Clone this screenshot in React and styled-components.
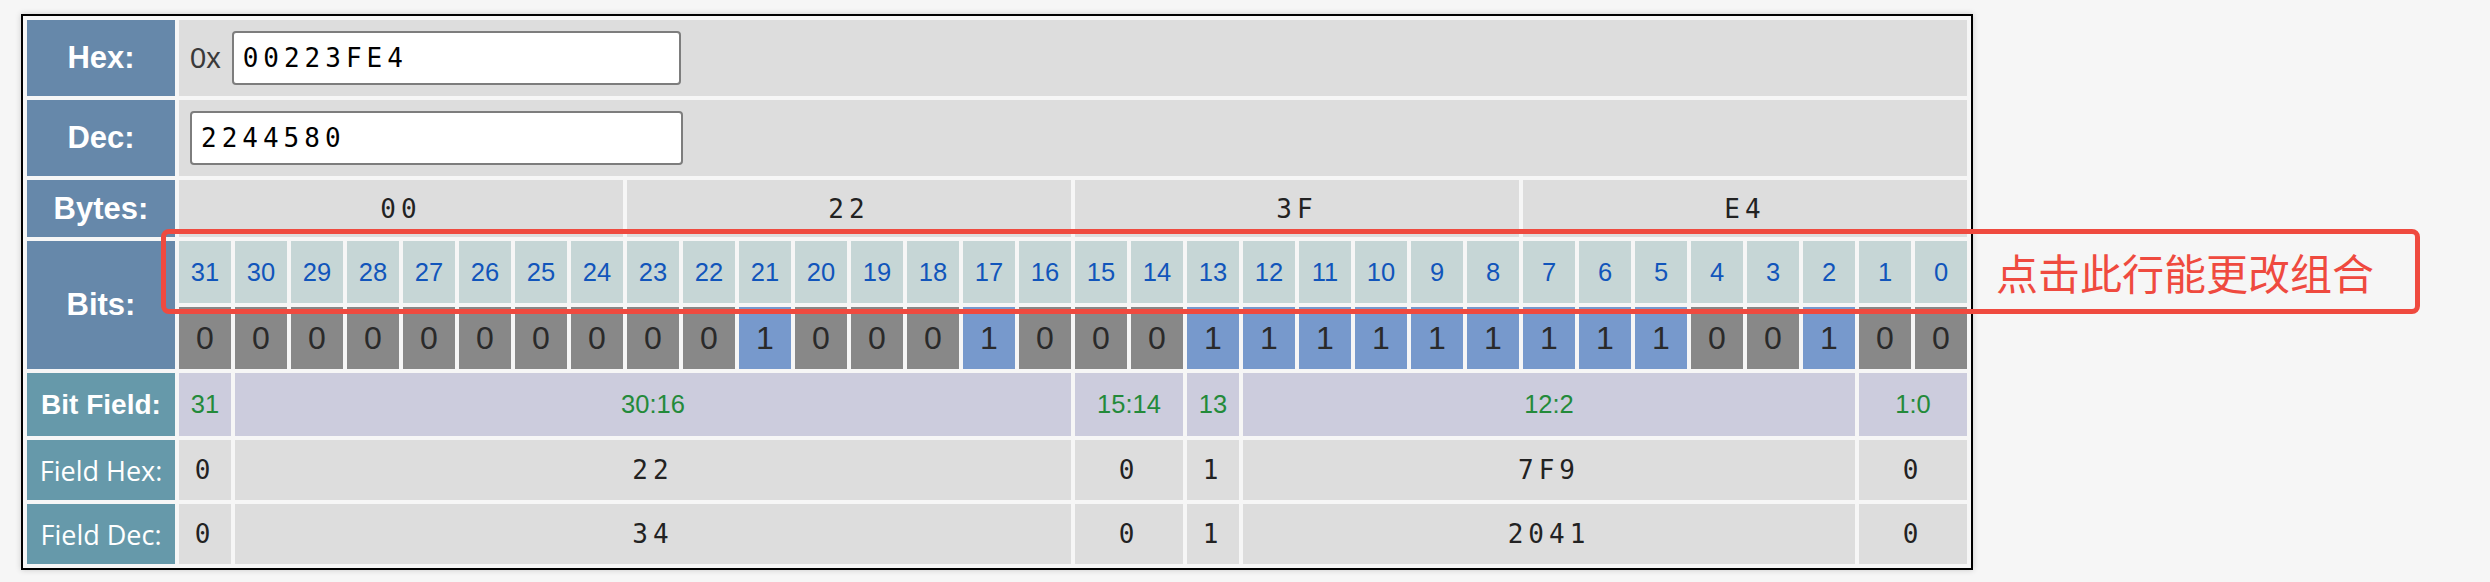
import React from 'react';
import styled, { createGlobalStyle } from 'styled-components';

const GlobalStyle = createGlobalStyle`
  html, body {
    margin: 0;
    padding: 0;
    background: #f6f6f6;
  }
  body {
    font-family: "Liberation Sans", Arial, sans-serif;
  }
`;

const VALUE = 0x00223fe4;
const FIELDS = [
  [31, 31],
  [30, 16],
  [15, 14],
  [13, 13],
  [12, 2],
  [1, 0],
];

const Page = styled.div`
  position: relative;
  box-sizing: border-box;
  width: 2490px;
  height: 582px;
  padding: 14px 0 0 21px;
`;

const Grid = styled.div`
  display: inline-grid;
  grid-template-columns: 148px repeat(32, 52px);
  grid-template-rows: 76px 76px 57px 62px 62px 63px 60px 60px;
  gap: 4px;
  padding: 4px;
  border: 2px solid #000;
  background: #f6f6f6;
  box-shadow: 0 0 6px rgba(0, 0, 0, 0.18);
`;

const Label = styled.div`
  grid-column: 1;
  grid-row: ${(p) => (p.$rows ? `span ${p.$rows}` : 'auto')};
  display: flex;
  align-items: center;
  justify-content: center;
  background: ${(p) => (p.$tone === 'teal' ? '#6699aa' : '#6688aa')};
  color: #fff;
  font-family: ${(p) =>
    p.$light ? '"Open Sans", "Noto Sans", sans-serif' : '"Liberation Sans", Arial, sans-serif'};
  font-weight: ${(p) => (p.$light ? 400 : 700)};
  font-size: ${(p) => p.$size || 31}px;
  white-space: nowrap;
`;

const Cell = styled.div`
  grid-column: span ${(p) => p.$span || 1};
  display: flex;
  align-items: center;
  justify-content: center;
  background: #dddddd;
  color: #222;
  font-family: "DejaVu Sans Mono", "Liberation Mono", monospace;
  font-size: 26px;
  letter-spacing: 5px;
  white-space: nowrap;
`;

const InputCell = styled.div`
  grid-column: span 32;
  display: flex;
  align-items: center;
  padding-left: 11px;
  background: #dddddd;
`;

const Prefix = styled.span`
  font-family: "Liberation Sans", Arial, sans-serif;
  font-size: 29px;
  color: #3a3a3a;
  margin-right: 11px;
`;

const Field = styled.input`
  box-sizing: border-box;
  width: ${(p) => p.$w}px;
  height: 54px;
  padding: 0 0 0 9px;
  border: 2px solid #7d7d7d;
  border-radius: 4px;
  background: #fff;
  color: #000;
  font-family: "DejaVu Sans Mono", "Liberation Mono", monospace;
  font-size: 26px;
  letter-spacing: 5px;
  outline: none;
`;

const BitNum = styled.div`
  display: flex;
  align-items: center;
  justify-content: center;
  background: #c6d6d6;
  color: #1155bb;
  font-size: 25.5px;
  cursor: pointer;
`;

const BitVal = styled.div`
  display: flex;
  align-items: center;
  justify-content: center;
  background: ${(p) => (p.$on ? '#7799cc' : '#888888')};
  color: #2a2a2a;
  font-size: 32px;
`;

const FieldName = styled.div`
  grid-column: span ${(p) => p.$span};
  display: flex;
  align-items: center;
  justify-content: center;
  background: #ccccdd;
  color: #238a3a;
  font-size: 25.5px;
`;

const Note = styled.div`
  position: absolute;
  left: 161px;
  top: 229px;
  width: 2259px;
  height: 85px;
  box-sizing: border-box;
  border: 5px solid #ef4a3f;
  border-radius: 8px;
  display: flex;
  align-items: center;
  justify-content: flex-end;
  padding-right: 41px;
  pointer-events: none;
`;

const NoteText = styled.span`
  font-family: "Noto Sans CJK SC", "Noto Sans", sans-serif;
  font-size: 42px;
  font-weight: 400;
  color: #ef4a3f;
  line-height: 1;
`;

const bitsDesc = Array.from({ length: 32 }, (_, i) => 31 - i);
const bitOf = (n) => (VALUE >>> n) & 1;
const fieldVal = (hi, lo) => {
  const width = hi - lo + 1;
  const mask = width >= 32 ? 0xffffffff : (1 << width) - 1;
  return (VALUE >>> lo) & mask;
};
const hex8 = VALUE.toString(16).toUpperCase().padStart(8, '0');
const bytes = [0, 1, 2, 3].map((i) => hex8.slice(i * 2, i * 2 + 2));

export default function App() {
  return (
    <Page>
      <GlobalStyle />
      <Grid>
        <Label>Hex:</Label>
        <InputCell>
          <Prefix>0x</Prefix>
          <Field $w={449} defaultValue={hex8} />
        </InputCell>

        <Label>Dec:</Label>
        <InputCell>
          <Field $w={493} defaultValue={String(VALUE)} />
        </InputCell>

        <Label>Bytes:</Label>
        {bytes.map((b, i) => (
          <Cell key={i} $span={8}>
            {b}
          </Cell>
        ))}

        <Label $rows={2}>Bits:</Label>
        {bitsDesc.map((n) => (
          <BitNum key={n}>{n}</BitNum>
        ))}
        {bitsDesc.map((n) => (
          <BitVal key={n} $on={bitOf(n) === 1}>
            {bitOf(n)}
          </BitVal>
        ))}

        <Label $tone="teal" $size={28}>
          Bit Field:
        </Label>
        {FIELDS.map(([hi, lo]) => (
          <FieldName key={hi} $span={hi - lo + 1}>
            {hi === lo ? hi : `${hi}:${lo}`}
          </FieldName>
        ))}

        <Label $tone="teal" $light $size={27}>
          Field Hex:
        </Label>
        {FIELDS.map(([hi, lo]) => (
          <Cell key={hi} $span={hi - lo + 1}>
            {fieldVal(hi, lo).toString(16).toUpperCase()}
          </Cell>
        ))}

        <Label $tone="teal" $light $size={27}>
          Field Dec:
        </Label>
        {FIELDS.map(([hi, lo]) => (
          <Cell key={hi} $span={hi - lo + 1}>
            {fieldVal(hi, lo)}
          </Cell>
        ))}
      </Grid>
      <Note>
        <NoteText>点击此行能更改组合</NoteText>
      </Note>
    </Page>
  );
}
